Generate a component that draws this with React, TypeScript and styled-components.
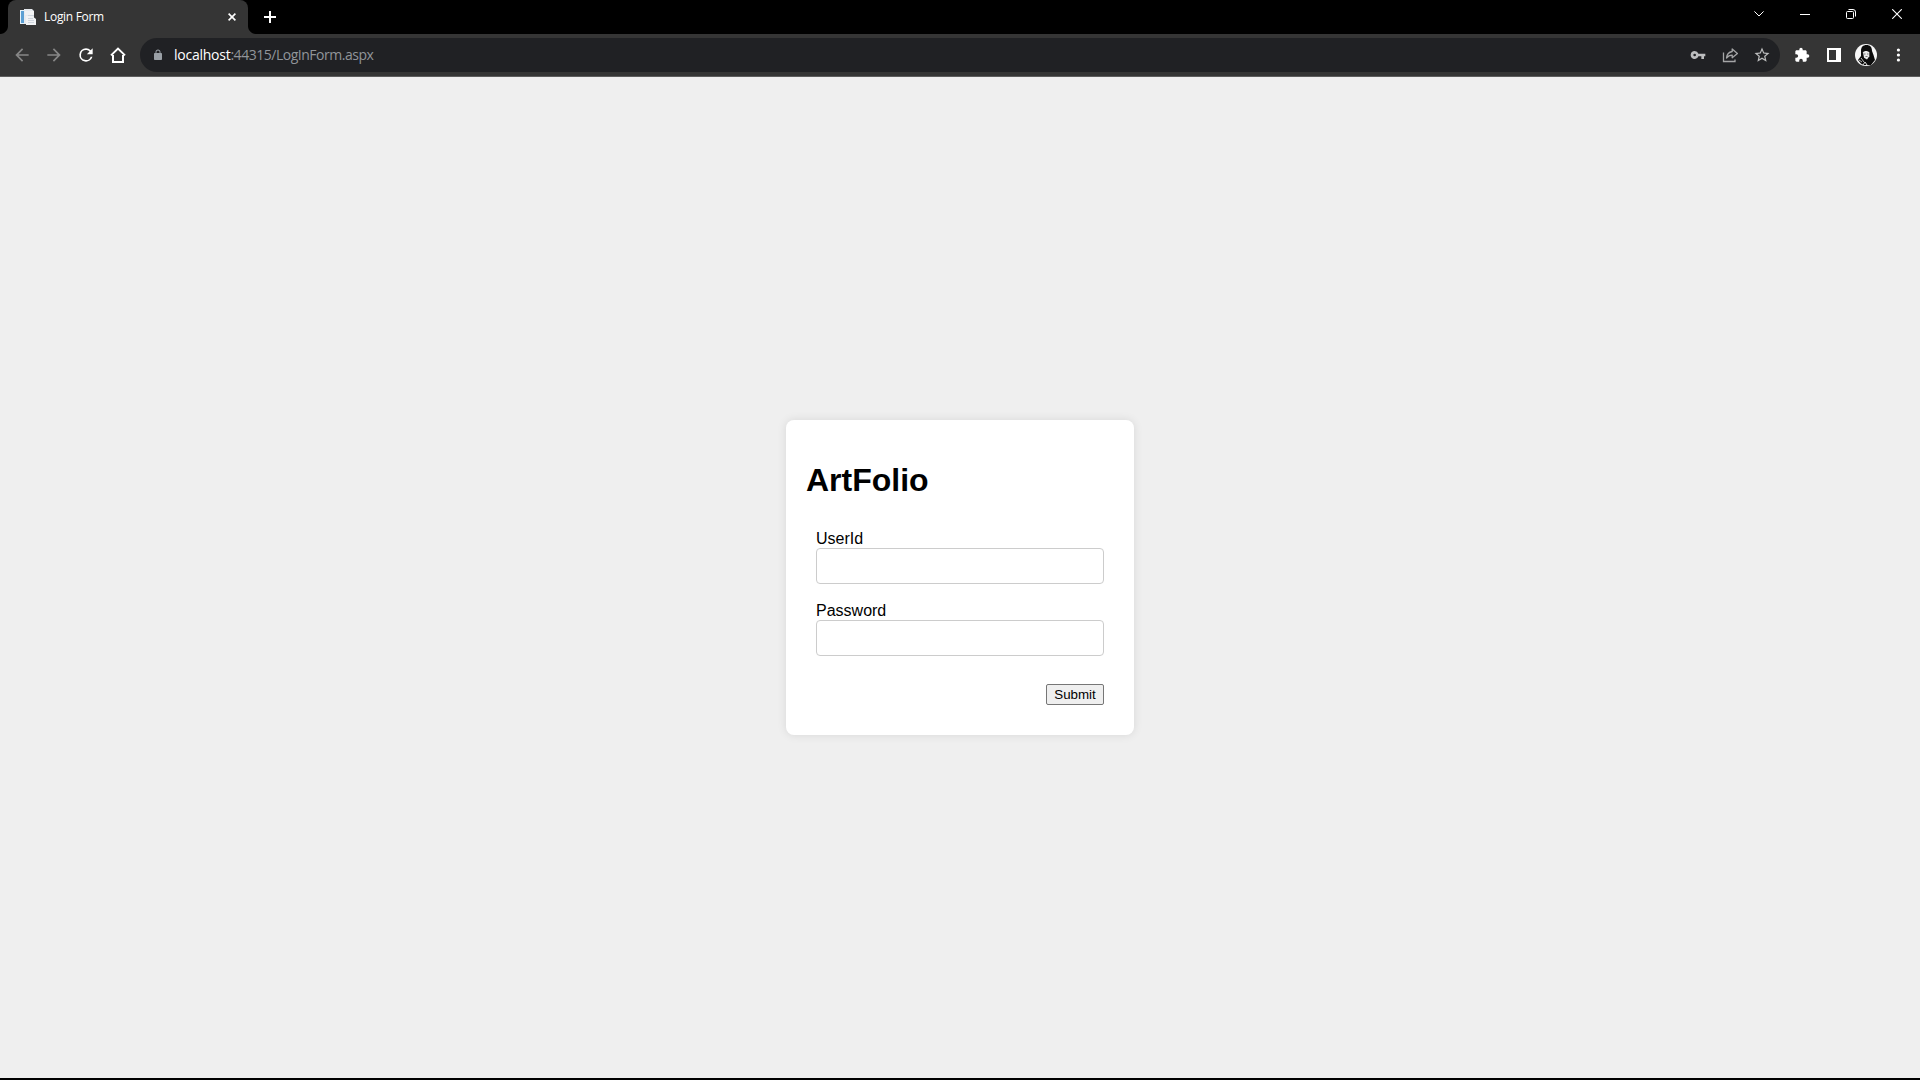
import React from "react";
import styled, { createGlobalStyle } from "styled-components";

const GlobalStyle = createGlobalStyle`
  *, *::before, *::after { box-sizing: border-box; }
  body { margin: 0; background: #efefef; overflow: hidden; }
`;

const Window = styled.div`
  display: flex;
  flex-direction: column;
  width: 1920px;
  height: 1080px;
  background: #000;
  font-family: "Open Sans", "Noto Sans", sans-serif;
`;

const TabStrip = styled.header`
  display: flex;
  justify-content: space-between;
  height: 34px;
  padding-left: 8px;
  background: #000;
`;

const Tabs = styled.div`
  display: flex;
`;

const Tab = styled.div`
  position: relative;
  display: flex;
  align-items: center;
  width: 240px;
  height: 34px;
  padding: 0 9px 0 12px;
  border-radius: 8px 8px 0 0;
  background: #353535;
  color: #fff;

  &::before, &::after {
    content: "";
    position: absolute;
    bottom: 0;
    width: 8px;
    height: 8px;
  }
  &::before {
    left: -8px;
    background: radial-gradient(circle at 0 0, #000 7.5px, #353535 8.5px);
  }
  &::after {
    right: -8px;
    background: radial-gradient(circle at 100% 0, #000 7.5px, #353535 8.5px);
  }
`;

const TabTitle = styled.span`
  flex: 1;
  margin-left: 8px;
  font-size: 12px;
  line-height: 16px;
  letter-spacing: -0.3px;
`;

const IconSlot = styled.span<{ $w: number; $color?: string }>`
  display: flex;
  flex: none;
  align-items: center;
  justify-content: center;
  width: ${(p) => p.$w}px;
  height: 100%;
  color: ${(p) => p.$color ?? "#fff"};
  svg { display: block; }
`;

const NewTab = styled(IconSlot)`
  margin-left: 11px;
`;

const WindowControls = styled.div`
  display: flex;
  height: 28px;
`;

const Toolbar = styled.nav`
  display: flex;
  align-items: center;
  height: 43px;
  padding: 0 6px;
  border-bottom: 1px solid #5d5d5d;
  background: #353535;
`;

const AddressBar = styled.div`
  display: flex;
  flex: 1;
  align-items: center;
  height: 34px;
  margin: 0 6px;
  padding: 0 2px 0 10px;
  border-radius: 17px;
  background: #202124;
`;

const Url = styled.span`
  flex: 1;
  margin-left: 8px;
  color: #91959a;
  font-size: 14px;
  line-height: 20px;
  letter-spacing: -0.48px;
`;

const Host = styled.span`
  color: #fff;
  letter-spacing: -0.25px;
`;

const Page = styled.main`
  display: flex;
  flex: none;
  align-items: center;
  justify-content: center;
  height: 1001px;
  background: #efefef;
  color: #000;
  font-family: "Liberation Sans", Arial, sans-serif;
`;

const Card = styled.form`
  width: 348px;
  height: 315px;
  padding: 20px;
  border-radius: 8px;
  background: #fff;
  box-shadow: 0 0 10px rgba(0, 0, 0, 0.1);
`;

const Title = styled.h1`
  margin: 22px 0 21px;
  font-size: 32px;
  line-height: 37px;
  font-weight: 700;
`;

const Fields = styled.div`
  display: flex;
  flex-direction: column;
  gap: 18px;
  padding: 10px;
`;

const Field = styled.label`
  display: flex;
  flex-direction: column;
  font-size: 16px;
  line-height: 18px;
`;

const Input = styled.input`
  width: 288px;
  height: 36px;
  padding: 8px;
  border: 1px solid #ccc;
  border-radius: 4px;
  background: #fff;
  outline: none;
`;

const SubmitButton = styled.button`
  align-self: flex-end;
  width: 58px;
  height: 21px;
  margin-top: 10px;
  padding: 0;
  border: 1px solid #767676;
  border-radius: 2px;
  background: #efefef;
  color: #000;
  font: 13.333px/17px "Liberation Sans", Arial, sans-serif;
`;

const Material = ({ d, size = 21 }: { d: string; size?: number }) => (
  <svg width={size} height={size} viewBox="0 0 24 24" fill="currentColor">
    <path d={d} />
  </svg>
);

const BACK = "M20 11H7.83l5.59-5.59L12 4l-8 8 8 8 1.41-1.41L7.83 13H20v-2z";
const FORWARD = "M12 4l-1.41 1.41L16.17 11H4v2h12.17l-5.58 5.59L12 20l8-8z";
const RELOAD =
  "M17.65 6.35A7.96 7.96 0 0 0 12 4a8 8 0 1 0 7.73 10h-2.08A6 6 0 1 1 12 6c1.66 0 3.14.69 4.22 1.78L13 11h7V4z";
const LOCK =
  "M18 8h-1V6c0-2.76-2.24-5-5-5S7 3.24 7 6v2H6c-1.1 0-2 .9-2 2v10c0 1.1.9 2 2 2h12c1.1 0 2-.9 2-2V10c0-1.1-.9-2-2-2zM15.1 8H8.9V6a3.1 3.1 0 0 1 6.2 0z";
const KEY =
  "M12.65 10A5.99 5.99 0 0 0 7 6a6 6 0 1 0 5.65 8H17v4h4v-4h2v-4H12.65zM7 14a2 2 0 1 1 0-4 2 2 0 0 1 0 4z";
const STAR =
  "M22 9.24l-7.19-.62L12 2 9.19 8.63 2 9.24l5.46 4.73L5.82 21 12 17.27 18.18 21l-1.63-7.03L22 9.24zM12 15.4l-3.76 2.27 1-4.28-3.32-2.88 4.38-.38L12 6.1l1.71 4.04 4.38.38-3.32 2.88 1 4.28L12 15.4z";
const PUZZLE =
  "M20.5 11H19V7c0-1.1-.9-2-2-2h-4V3.5a2.5 2.5 0 0 0-5 0V5H4c-1.1 0-2 .9-2 2v3.8h1.5a2.7 2.7 0 0 1 0 5.4H2V20c0 1.1.9 2 2 2h3.8v-1.5a2.7 2.7 0 0 1 5.4 0V22H17c1.1 0 2-.9 2-2v-4h1.5a2.5 2.5 0 0 0 0-5z";

const Favicon = () => (
  <svg width="16" height="16" viewBox="0 0 16 16">
    <path d="M0 1h5v14H0z" fill="#e5f1f9" />
    <path d="M1 2h3v12H1z" fill="#5b9fd3" />
    <path d="M4 0h8l2 2v13H4z" fill="#e6eaef" />
    <path d="M5 3h5M5 5h5" stroke="#f6f8fa" />
    <path d="M6 7h6l4 3v6H6z" fill="#f1f2f4" />
    <path d="M10 2h4v5h-4z" fill="#f5f5f6" />
    <path d="M8 6.5h6M8 9.5h5M8 11.5h6M8 13.5h6" stroke="#ced5de" />
  </svg>
);

const Home = () => (
  <svg width="16" height="16" viewBox="0 0 16 16" fill="none" stroke="currentColor" strokeWidth="2">
    <path d="M3 8v7h10V8M1 8.4 8 1.6l7 6.8" />
  </svg>
);

const Share = () => (
  <svg width="16" height="16" viewBox="0 0 16 16" fill="none" stroke="currentColor" strokeWidth="1.3">
    <path d="M1.5 5.5V14.5h11.5V12.5" />
    <path d="M10.2 2 15.4 6.4l-5.2 4.3V8.2C7.8 8.2 6 9 4.5 11c.4-3.6 2.4-6 5.7-6.5z" strokeLinejoin="round" />
  </svg>
);

const Avatar = () => (
  <svg width="22" height="22" viewBox="0 0 22 22">
    <defs>
      <clipPath id="avatar-circle"><circle cx="11" cy="11" r="11" /></clipPath>
    </defs>
    <g clipPath="url(#avatar-circle)">
      <path d="M0 0h22v22H0z" fill="#f6f6f6" />
      <path d="M6 7C6 3 8 1 11.5 1S17 3 17 7l1.5 4 1.5 5-4 5H7l-4-5 3-4z" fill="#0c0c0c" />
      <path d="M8 8.5c1-2 5-2 6.3 0v3.8L12 15.6 9 13.8z" fill="#e9e9e9" />
      <path d="M9 10h1.5M12 10h1.5M10.5 12.5h2" stroke="#777" />
      <path d="m4 16 3 2M6 14l3 4" stroke="#bbb" />
      <path d="M2 18.5 8 21l2-3 2 3" stroke="#ddd" fill="none" />
    </g>
  </svg>
);

type LineProps = { d: string; w: number; h: number; stroke?: number };
const Line = ({ d, w, h, stroke = 1 }: LineProps) => (
  <svg width={w} height={h} viewBox={`0 0 ${w} ${h}`} fill="none" stroke="currentColor" strokeWidth={stroke}>
    <path d={d} />
  </svg>
);

export default function App() {
  return (
    <Window>
      <GlobalStyle />
      <TabStrip>
        <Tabs>
          <Tab>
            <Favicon />
            <TabTitle>Login Form</TabTitle>
            <IconSlot $w={14}><Line w={8} h={8} stroke={1.6} d="M.6.6l6.8 6.8M7.4.6.6 7.4" /></IconSlot>
          </Tab>
          <NewTab $w={22}><Line w={12} h={12} stroke={2} d="M6 0v12M0 6h12" /></NewTab>
        </Tabs>
        <WindowControls>
          <IconSlot $w={46}><Line w={10} h={6} d="M.4.4 5 5 9.6.4" /></IconSlot>
          <IconSlot $w={46}><Line w={10} h={1} d="M0 .5h10" /></IconSlot>
          <IconSlot $w={46}>
            <svg width="10" height="10" viewBox="0 0 10 10" fill="none" stroke="currentColor">
              <rect x=".5" y="2.5" width="7" height="7" rx="1" />
              <path d="M2.5.5H7A2.5 2.5 0 0 1 9.5 3v4.5" />
            </svg>
          </IconSlot>
          <IconSlot $w={46}><Line w={10} h={10} stroke={1.1} d="M.2.2l9.6 9.6M9.8.2.2 9.8" /></IconSlot>
        </WindowControls>
      </TabStrip>
      <Toolbar>
        <IconSlot $w={32} $color="#868686"><Material d={BACK} size={20} /></IconSlot>
        <IconSlot $w={32} $color="#868686"><Material d={FORWARD} size={20} /></IconSlot>
        <IconSlot $w={32}><Material d={RELOAD} size={20} /></IconSlot>
        <IconSlot $w={32}><Home /></IconSlot>
        <AddressBar>
          <IconSlot $w={16} $color="#9aa0a6"><Material d={LOCK} size={12} /></IconSlot>
          <Url><Host>localhost</Host>:44315/LogInForm.aspx</Url>
          <IconSlot $w={32} $color="#bcbdbe"><Material d={KEY} size={16} /></IconSlot>
          <IconSlot $w={32} $color="#a4a5a6"><Share /></IconSlot>
          <IconSlot $w={32} $color="#bcbdbe"><Material d={STAR} size={18} /></IconSlot>
        </AddressBar>
        <IconSlot $w={32}><Material d={PUZZLE} size={16} /></IconSlot>
        <IconSlot $w={32}>
          <svg width="14" height="14" viewBox="0 0 14 14">
            <path d="M0 0h14v14H0zM2 2v10h7V2z" fill="currentColor" fillRule="evenodd" />
          </svg>
        </IconSlot>
        <IconSlot $w={32}><Avatar /></IconSlot>
        <IconSlot $w={32}>
          <svg width="4" height="14" viewBox="0 0 4 14" fill="currentColor">
            <circle cx="2.4" cy="2" r="1.6" /><circle cx="2.4" cy="7" r="1.6" /><circle cx="2.4" cy="12" r="1.6" />
          </svg>
        </IconSlot>
      </Toolbar>
      <Page>
        <Card onSubmit={(e: React.FormEvent) => e.preventDefault()}>
          <Title>ArtFolio</Title>
          <Fields>
            <Field>UserId<Input type="text" /></Field>
            <Field>Password<Input type="password" /></Field>
            <SubmitButton type="submit">Submit</SubmitButton>
          </Fields>
        </Card>
      </Page>
    </Window>
  );
}
